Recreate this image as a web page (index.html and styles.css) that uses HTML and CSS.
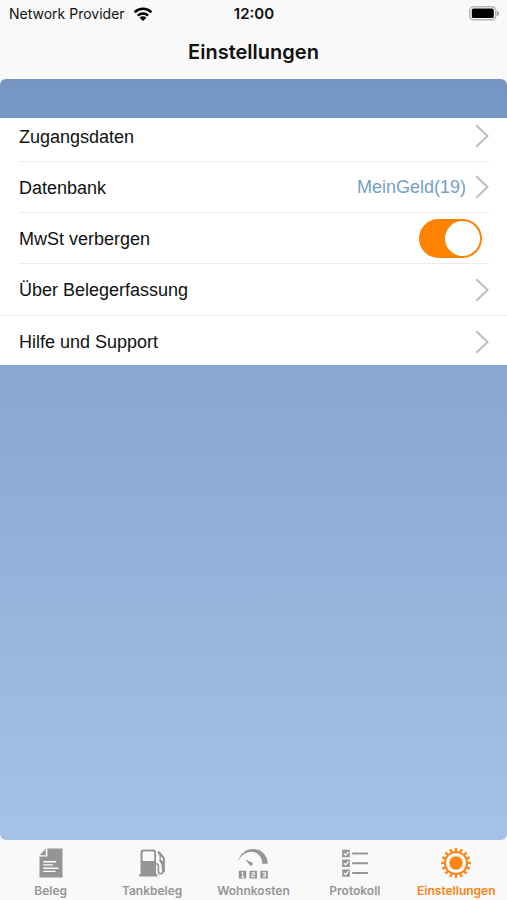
FILE: index.html
```html
<!DOCTYPE html>
<html lang="de">
<head>
<meta charset="utf-8">
<meta name="viewport" content="width=device-width, initial-scale=1">
<title>Einstellungen</title>
<link rel="stylesheet" href="styles.css">
</head>
<body>
<header class="top">
  <div class="status">
    <div class="carrier">
      <span>Network Provider</span>
      <svg class="wifi" viewBox="0 0 20 14" aria-hidden="true">
        <g fill="none" stroke="#000" stroke-width="2.6">
          <path d="M1.6 5.2a12 12 0 0 1 16.8 0"/>
          <path d="M4.9 8.6a7.3 7.3 0 0 1 10.2 0"/>
        </g>
        <path d="M10 14l-3.4-3.3a4.8 4.8 0 0 1 6.8 0z"/>
      </svg>
    </div>
    <time class="clock">12:00</time>
    <svg class="battery" viewBox="0 0 30 15" aria-hidden="true">
      <rect x="0.8" y="0.8" width="26" height="13" rx="4" fill="#fff" stroke="#b4b4b4" stroke-width="1.5"/>
      <rect x="2.8" y="2.6" width="22" height="9.4" rx="1.6"/>
      <path d="M28 4.8q2.2 1 2.2 2.6T28 10z" fill="#a5a5a5"/>
    </svg>
  </div>
  <h1 class="title">Einstellungen</h1>
</header>
<main class="content">
  <ul class="list">
    <li class="row"><a class="line" href="#zugang"><span class="label">Zugangsdaten</span>
      <svg class="chevron" viewBox="0 0 14 24" aria-hidden="true"><path d="M1.2 1.2L12.6 12L1.2 22.8"/></svg></a></li>
    <li class="row"><a class="line" href="#datenbank"><span class="label">Datenbank</span><span class="value">MeinGeld(19)</span>
      <svg class="chevron" viewBox="0 0 14 24" aria-hidden="true"><path d="M1.2 1.2L12.6 12L1.2 22.8"/></svg></a></li>
    <li class="row"><div class="line"><label class="label" for="mwst">MwSt verbergen</label>
      <input class="switch" id="mwst" type="checkbox" role="switch" checked></div></li>
    <li class="row row-wide"><a class="line" href="#ueber"><span class="label">Über Belegerfassung</span>
      <svg class="chevron" viewBox="0 0 14 24" aria-hidden="true"><path d="M1.2 1.2L12.6 12L1.2 22.8"/></svg></a></li>
    <li class="row"><a class="line" href="#hilfe"><span class="label">Hilfe und Support</span>
      <svg class="chevron" viewBox="0 0 14 24" aria-hidden="true"><path d="M1.2 1.2L12.6 12L1.2 22.8"/></svg></a></li>
  </ul>
</main>
<nav class="tabs">
  <a class="tab" href="#beleg">
    <svg class="icon" viewBox="0 0 32 32" aria-hidden="true">
      <path d="M12.4 1.5H27.5V30.5H4.5V9.5H12.4z" fill="currentColor"/>
      <path d="M10.8 1.8V8.2H4.6z" fill="currentColor"/>
      <path d="M8.3 14.8h12.9M8.3 17.9h9.6M8.3 21.2h15.2M8.3 24.4h12.4" stroke="#fff" stroke-width="1.4"/>
    </svg>
    <span>Beleg</span>
  </a>
  <a class="tab" href="#tankbeleg">
    <svg class="icon" viewBox="0 0 32 32" aria-hidden="true">
      <path fill-rule="evenodd" d="M7.5 2.5h9.5a3 3 0 0 1 3 3V27h1.4v2.5H3.2V27h1.3V5.5a3 3 0 0 1 3-3zM8 4.6a1.4 1.4 0 0 0-1.4 1.4v8h11.6V6a1.4 1.4 0 0 0-1.4-1.4z" fill="currentColor"/>
      <path d="M20 16.8q2.4 0 2.4 3v4.4q0 2.6 2.2 2.6t2.2-2.6q0-2-.5-4.2V13" fill="none" stroke="currentColor" stroke-width="1.6"/>
      <path d="M21.4 5.2l1.4-1.5L28 9.6q.9 1.1.9 2.6v13h-2.2v-6.8l-3.2-3.6V8.5z" fill="currentColor"/>
      <path d="M24.8 9.3l2 2.4v2.6l-2-2z" fill="#fff"/>
    </svg>
    <span>Tankbeleg</span>
  </a>
  <a class="tab" href="#wohnkosten">
    <svg class="icon" viewBox="0 0 32 32" aria-hidden="true">
      <path d="M1.5 13.7C3.6 5.8 9.6 2 16 2C24.3 2 30.5 8 30.8 16.8H25.2C25 10.4 21.6 5.8 15.8 4.8C10 4.2 4.9 7.4 1.5 13.7z" fill="currentColor"/>
      <path d="M8.2 12.4l6.8 3q1.5 1.2.4 2.6t-2.7.1z" fill="currentColor"/>
      <path d="M1.8 23.7h7.4v7.8H1.8zM12.6 23.7h7.4v7.8h-7.4zM23.4 23.7h7.4v7.8h-7.4z" fill="currentColor"/>
      <path d="M4.4 26l1.3-.8v4.7M4 30h3.4M14.6 25.6h2.9v2h-2.6v2.2h3.2M25.5 25.5h2.9v4.4h-3M26 27.7h2.4" fill="none" stroke="#fff"/>
    </svg>
    <span>Wohnkosten</span>
  </a>
  <a class="tab" href="#protokoll">
    <svg class="icon" viewBox="0 0 32 32" aria-hidden="true">
      <path d="M3.2 2.8h7.6v7.4H3.2zM3.2 12.6h7.6V20H3.2zM3.2 22.4h7.6v7.4H3.2z" fill="currentColor"/>
      <path d="M5 6.4l1.7 1.8 2.8-3.6M5 16.2L6.7 18l2.8-3.6M5 26l1.7 1.8 2.8-3.6" fill="none" stroke="#fff" stroke-width="1.3"/>
      <path d="M13.2 6.5H29M13.2 16.3H29M13.2 26.1H29" stroke="currentColor" stroke-width="2"/>
    </svg>
    <span>Protokoll</span>
  </a>
  <a class="tab tab-active" href="#einstellungen" aria-current="page">
    <svg class="icon" viewBox="0 0 32 32" aria-hidden="true">
      <circle cx="16" cy="16" r="6.7" fill="currentColor"/>
      <circle cx="16" cy="16" r="11.1" fill="none" stroke="currentColor" stroke-width="2"/>
      <circle cx="16" cy="16" r="13.4" fill="none" stroke="currentColor" stroke-width="3" pathLength="64" stroke-dasharray="1.8 2.2" stroke-dashoffset="0.9"/>
    </svg>
    <span>Einstellungen</span>
  </a>
</nav>
</body>
</html>
```
FILE: styles.css
```css
* {
  box-sizing: border-box;
}

body {
  margin: 0;
  min-height: 100vh;
  display: flex;
  flex-direction: column;
  background: #f9f9f9;
  color: #111;
  font-family: Inter, "Liberation Sans", sans-serif;
}

a {
  color: inherit;
  text-decoration: none;
}

.status {
  display: grid;
  grid-template-columns: 1fr auto 1fr;
  align-items: center;
  height: 27px;
  padding: 0 8px 0 9px;
  font-size: 14px;
}

.carrier {
  display: flex;
  align-items: center;
  gap: 8px;
  white-space: nowrap;
}

.wifi {
  width: 20px;
  height: 14px;
}

.clock {
  font-size: 15px;
  font-weight: 600;
}

.battery {
  width: 30px;
  height: 15px;
  justify-self: end;
}

.title {
  margin: 0;
  height: 52px;
  font-size: 20px;
  font-weight: 600;
  line-height: 50px;
  text-align: center;
}

.content {
  flex: 1;
  padding-top: 39px;
  border-radius: 6px;
  background: linear-gradient(#7596c3, #a5c3e7);
}

.list {
  margin: 0;
  padding: 0;
  overflow: hidden;
  list-style: none;
  background: #fff;
  font-family: "Liberation Sans", Arial, sans-serif;
  font-size: 18px;
}

.row {
  padding: 0 18px 0 19px;
}

/* The first row is partly scrolled under the header band. */
.row:first-child {
  margin-top: -7px;
}

.row:last-child {
  margin-bottom: -2px;
}

.line {
  display: flex;
  align-items: center;
  gap: 9px;
  height: 51px;
  border-bottom: 1px solid #ececee;
}

.row-wide {
  border-bottom: 1px solid #ececee;
}

.row-wide .line,
.row:last-child .line {
  border-bottom: 0;
}

.label {
  flex: 1;
  padding-top: 2px;
}

.value {
  color: #74a0c3;
}

.chevron {
  width: 14px;
  height: 24px;
  fill: none;
  stroke: #bdbdbf;
  stroke-width: 2;
}

.switch {
  appearance: none;
  display: flex;
  width: 63px;
  height: 39px;
  margin: 0 7px 0 0;
  padding: 2px;
  border-radius: 20px;
  background: #d8d8d8;
}

.switch::before {
  content: "";
  width: 35px;
  height: 35px;
  border-radius: 50%;
  background: #fff;
}

.switch:checked {
  justify-content: flex-end;
  background: #ff8200;
}

.tabs {
  display: grid;
  grid-template-columns: repeat(5, 1fr);
  height: 60px;
  padding-top: 7px;
}

.tab {
  display: flex;
  flex-direction: column;
  align-items: center;
  gap: 4px;
  color: #959595;
  font-size: 12px;
  font-weight: 600;
  line-height: 16px;
}

.tab-active {
  color: #fb8414;
}

.icon {
  width: 32px;
  height: 32px;
}
```
